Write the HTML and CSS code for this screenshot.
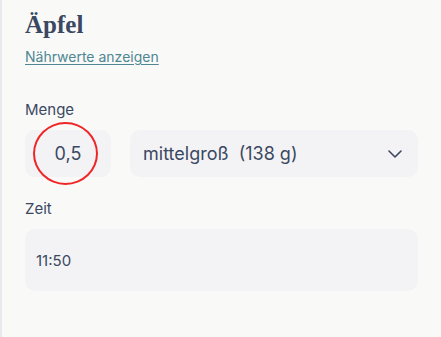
FILE: index.html
```html
<!DOCTYPE html>
<html lang="de">
<head>
    <meta charset="UTF-8">
    <meta name="viewport" content="width=device-width, initial-scale=1.0">
    <title>Äpfel</title>
    <link rel="stylesheet" href="styles.css">
</head>
<body>
    <div class="panel">
        <h1 class="food-title">Äpfel</h1>
        <a class="nutrition-link" href="#">Nährwerte anzeigen</a>

        <div class="field">
            <label class="field-label">Menge</label>
            <div class="amount-row">
                <div class="amount-box">
                    <span class="amount-value">0,5</span>
                    <span class="highlight-ring"></span>
                </div>
                <div class="portion-select">
                    <span class="portion-text">mittelgroß&nbsp;&nbsp;(138 g)</span>
                    <svg class="chevron" width="14" height="8" viewBox="0 0 14 8" fill="none">
                        <path d="M1 1l6 6 6-6" stroke="#3b4861" stroke-width="1.6" stroke-linecap="round" stroke-linejoin="round"/>
                    </svg>
                </div>
            </div>
        </div>

        <div class="field">
            <label class="field-label">Zeit</label>
            <div class="time-box">11:50</div>
        </div>
    </div>
</body>
</html>
```

FILE: styles.css
```css
body {
    margin: 0;
    background-color: #f9f9f8;
    color: #3b4861;
    font-family: Inter, 'Noto Sans', sans-serif;
}
.panel {
    min-height: 337px;
    box-sizing: border-box;
    border-left: 2px solid #e8e8f0;
    padding: 9px 23px 0 23px;
}
.food-title {
    font-family: 'Liberation Serif', serif;
    font-weight: 700;
    font-size: 25px;
    line-height: 32px;
    margin: 0 0 5px 0;
    color: #3b4861;
}
.nutrition-link {
    display: inline-block;
    font-size: 14px;
    line-height: 17px;
    color: #4e8793;
    text-decoration: underline;
    text-underline-offset: 2px;
}
.field {
    margin-top: 35px;
}
.field + .field {
    margin-top: 23px;
}
.field-label {
    display: block;
    font-size: 15px;
    line-height: 18px;
    margin-bottom: 11px;
}
.amount-row {
    display: flex;
    gap: 19px;
}
.amount-box {
    position: relative;
    width: 86px;
    height: 47px;
    border-radius: 10px;
    background: #f3f3f5;
    display: flex;
    align-items: center;
    justify-content: center;
}
.amount-value {
    font-size: 18px;
}
.highlight-ring {
    position: absolute;
    left: 8px;
    top: -8px;
    width: 61px;
    height: 59px;
    border: 2px solid #f02626;
    border-radius: 50%;
}
.portion-select {
    flex: 1;
    height: 47px;
    border-radius: 10px;
    background: #f3f3f5;
    display: flex;
    align-items: center;
    justify-content: space-between;
    padding: 0 16px 0 13px;
}
.portion-text {
    font-size: 18px;
}
.time-box {
    height: 62px;
    border-radius: 10px;
    background: #f3f3f5;
    display: flex;
    align-items: center;
    padding-left: 11px;
    font-size: 15px;
}
```
